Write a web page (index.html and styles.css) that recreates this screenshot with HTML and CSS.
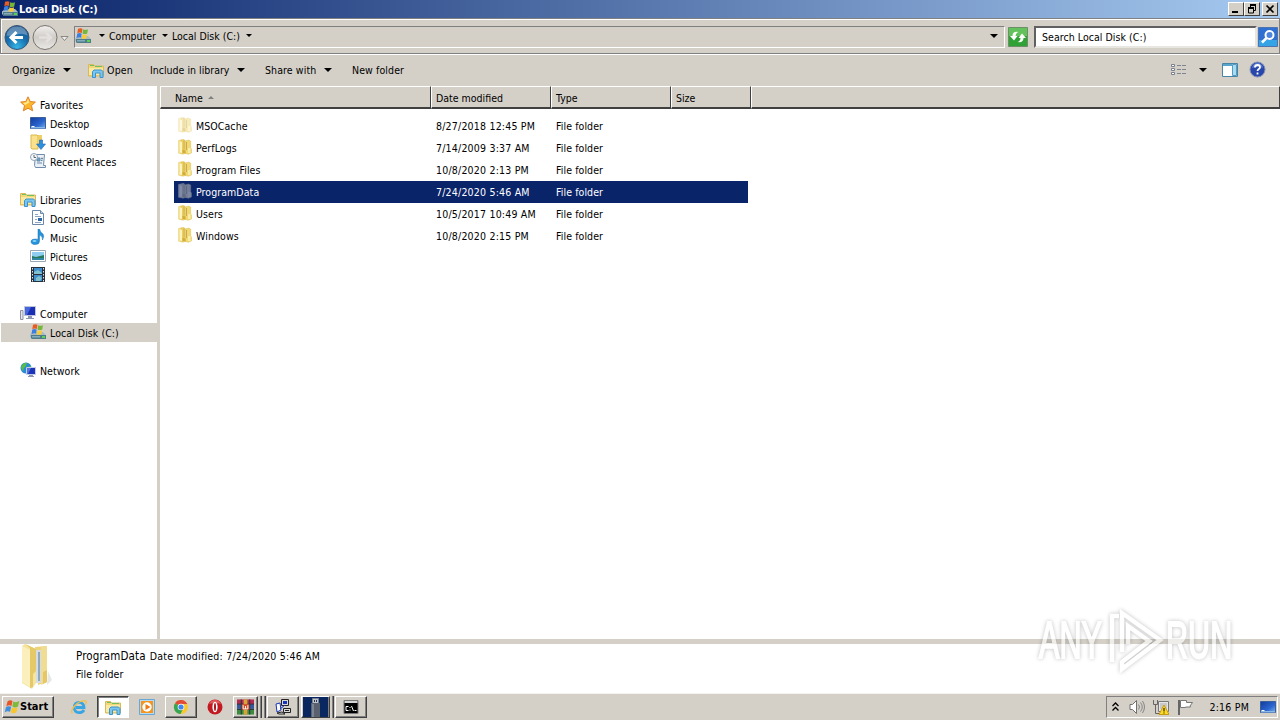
FILE: index.html
```html
<!DOCTYPE html>
<html lang="en">
<head>
    <meta charset="UTF-8">
    <meta name="viewport" content="width=device-width, initial-scale=1.0">
    <title>Local Disk (C:)</title>
    <link rel="stylesheet" href="styles.css">
</head>
<body>
    <!-- Shared icons -->
    <svg class="sprites" width="0" height="0">
        <defs>
            <linearGradient id="gold" x1="0" x2="1"><stop offset="0" stop-color="#fbeeb0"/><stop offset=".5" stop-color="#e9c94f"/><stop offset="1" stop-color="#f6e58e"/></linearGradient>
            <linearGradient id="screen" x1="0" y1="0" x2="1" y2="1"><stop offset="0" stop-color="#123a9c"/><stop offset=".6" stop-color="#2b66cf"/><stop offset="1" stop-color="#7db4ec"/></linearGradient>
            <radialGradient id="backfill" cx=".5" cy=".9" r=".9"><stop offset="0" stop-color="#35b5e4"/><stop offset=".5" stop-color="#1870b0"/><stop offset="1" stop-color="#1c4f87"/></radialGradient>
            <linearGradient id="fwdfill" x1="0" y1="0" x2="0" y2="1"><stop offset="0" stop-color="#f2f0ee"/><stop offset=".5" stop-color="#cfccc8"/><stop offset="1" stop-color="#ebe9e6"/></linearGradient>
        </defs>
        <symbol id="flag" viewBox="0 0 16 16">
            <path d="M3.500 2.500q2.500-2 5-.5L7.500 7Q5 5.500 2.300 7.500z" fill="#e8542a"/>
            <path d="M9.300 2.500q3 1.500 6-.5l-1.300 5.500q-3 2-5.700 0z" fill="#7fb93a"/>
            <path d="M2 8.300q2.500-2 5.200-.5l-1.200 5q-2.500-1.500-5.300.5z" fill="#3f8fdc"/>
            <path d="M8 8.300q3 1.700 5.700 0l-1.300 5q-2.700 2-5.700 0z" fill="#f8c62c"/>
        </symbol>
        <symbol id="disk" viewBox="0 0 16 16">
            <path d="M0 10.500L3 8h10l3 3v4H2l-2-2z" fill="#a9bcc4"/>
            <path d="M1 11h15v4H2l-1-1z" fill="#4f7b8b"/>
            <path d="M2 12h8v1.500H2z" fill="#86acb9"/>
            <path d="M12 12h3v2h-3z" fill="#57d44f"/>
            <path d="M3 .8q2.500-1.300 4.500 0l-.7 4.200Q4.500 4 2.300 5.200z" fill="#e65d24"/>
            <path d="M8.200 1.200q2.300 1.200 4.800 0l-.8 4.300q-2.500 1.200-4.700 0z" fill="#75b73a"/>
            <path d="M2.200 5.700q2.300-1.200 4.500 0L6 9.500Q4 8.700 1.500 10z" fill="#3a7ee0"/>
            <path d="M7.400 6.200q2.300 1.200 4.700 0l-.7 4q-2.400 1-4.700 0z" fill="#f7cb36"/>
        </symbol>
        <symbol id="folder" viewBox="0 0 16 16">
            <path d="M1.500 1.500l5-1.200L8 1.500v13l-2 .7-4.500-1z" fill="url(#gold)" stroke="#e0c766" stroke-width=".5"/>
            <path d="M8 2l3.500-1 2.200 1v7l.8 1v4l-3 1.200L8 14.500z" fill="#f0d973" stroke="#dcbf58" stroke-width=".5"/>
            <path d="M7 1v9.500M9.500 3v8" stroke="#cba94a" fill="none"/>
            <path d="M3 2.500l2 .500V14l-2-.5z" fill="#fdf3be"/>
            <path d="M5.500 10.500l3 1v3l-3-.5z" fill="#d2ac3c"/>
            <path d="M11 9h2.500v5H11z" fill="#f9eca4"/>
        </symbol>
        <symbol id="library" viewBox="0 0 16 16">
            <path d="M.5 2.500h5l1 1.500h9v10H.5z" fill="#f2d878" stroke="#d9b95c"/>
            <path d="M2 3.500h4M7 4.500h7" stroke="#6fbf63"/>
            <path d="M1 6h14v7H1z" fill="#fae9a2"/>
            <path d="M4.500 15.500V9.500L6 8h7.500L15 9.500v6h-3V11H7.500v4.500z" fill="#79c5ee" stroke="#3a93cc"/>
        </symbol>
        <symbol id="desktop" viewBox="0 0 16 16">
            <path d="M.5 2.500h15v11H.5z" fill="url(#screen)" stroke="#3c5f9c"/>
            <path d="M1 12h14v1.500H1z" fill="#8db9e6"/>
            <path d="M1.500 11.500h3" stroke="#fff"/>
        </symbol>
        <symbol id="monitor" viewBox="0 0 16 16">
            <path d="M.5 5.500h2.500v9H.5z" fill="#e3e5ea" stroke="#8b93a3"/>
            <path d="M4.500 1.500h11v9h-11z" fill="#1a2fb4" stroke="#bfc6dc"/>
            <path d="M5 2h6L7 10H5z" fill="#4666dc"/>
            <path d="M8 11h4v2h2v1H6v-1h2z" fill="#8e98b3"/>
        </symbol>
        <symbol id="network" viewBox="0 0 16 16">
            <circle cx="6" cy="6" r="5.500" fill="#2a8bd3"/>
            <path d="M2 3q3-3 5-2L6 4 4 6 3 9Q0 6 2 3zM7 5l4-1v3L8 9z" fill="#56bd4c"/>
            <path d="M6.500 5.500h9v7h-9z" fill="#1b34b8" stroke="#c5cee8"/>
            <path d="M7 6h4l-3 6H7z" fill="#5273e0"/>
            <path d="M9 13h4v1h1v1H8v-1h1z" fill="#8e98b3"/>
        </symbol>
    </svg>

    <header class="titlebar">
        <svg class="icon"><use href="#disk"/></svg>
        <h1 class="title">Local Disk (C:)</h1>
        <div class="window-buttons">
            <button class="wbtn"><svg width="12" height="10"><path d="M2 8h6" stroke="#000" stroke-width="2"/></svg></button>
            <button class="wbtn"><svg width="12" height="10"><path d="M4 1h6M2 4h6" stroke="#000" stroke-width="2"/><path d="M4.500 1v3M9.500 1v5.500h-2M2.500 4v5h5V4" stroke="#000" fill="none"/></svg></button>
            <button class="wbtn wbtn-close"><svg width="12" height="10"><path d="M2.500 1.500l7 7M9.500 1.500l-7 7" stroke="#000" stroke-width="1.700"/></svg></button>
        </div>
    </header>

    <nav class="addressbar">
        <svg class="nav-arrows" width="70" height="28">
            <circle cx="17" cy="14.500" r="12" fill="url(#backfill)" stroke="#3a5778"/>
            <path d="M6.500 12.500Q8 3.500 17 3.500t10.500 9q-5-3-10.500-1t-10.500 1z" fill="#fff" opacity=".3"/>
            <path d="M11 14.500h12M16.500 9L11 14.500l5.500 5.500" stroke="#fff" stroke-width="3" fill="none"/>
            <circle cx="45" cy="14.500" r="12" fill="url(#fwdfill)" stroke="#77736e"/>
            <path d="M39 14.500h12M46 10l5 4.500-5 4.500" stroke="#e3e0dd" stroke-width="2.500" fill="none"/>
            <path d="M61 13.500h7l-3.500 4z" fill="#eee" stroke="#77736e" stroke-width=".8"/>
        </svg>
        <div class="path">
            <svg class="icon path-icon"><use href="#disk"/></svg>
            <span class="arrow small"></span>
            <span class="crumb">Computer</span>
            <span class="arrow small"></span>
            <span class="crumb">Local Disk (C:)</span>
            <span class="arrow small"></span>
            <span class="arrow path-drop"></span>
        </div>
        <svg class="refresh" width="20" height="20">
            <path d="M.5.5h19v19H.5z" fill="#2fa135" stroke="#6d8f68"/>
            <path d="M1 1h18v8H1z" fill="#64c25c"/>
            <path d="M2 9l4 4.500L9.500 9H7.500q0-3 3-4Q4.500 4 4.500 9zM18 11l-4-4.500-3.500 4.500h2q0 3-3 4 6 1 6-4z" fill="#fff"/>
        </svg>
        <div class="search">Search Local Disk (C:)</div>
        <svg class="search-btn" width="20" height="20">
            <path d="M.5.5h19v19H.5z" fill="#2f6fd2" stroke="#4f74ad"/>
            <path d="M1 13h18v6H1z" fill="#35a4e6"/>
            <circle cx="11.500" cy="8" r="4" fill="#4d84dc" stroke="#fff" stroke-width="2"/>
            <path d="M8.500 11L4 15.500" stroke="#fff" stroke-width="2.500"/>
        </svg>
    </nav>

    <div class="toolbar">
        <span class="tool organize">Organize <i class="arrow"></i></span>
        <span class="tool open"><svg class="icon"><use href="#library"/></svg>Open</span>
        <span class="tool include">Include in library <i class="arrow"></i></span>
        <span class="tool share">Share with <i class="arrow"></i></span>
        <span class="tool new">New folder</span>
        <div class="view-tools">
            <svg width="16" height="14"><g fill="#fff" stroke="#77808b"><path d="M.5 1.500h3v2h-3zM.5 5.500h3v2h-3zM.5 9.500h3v2h-3z"/></g><path d="M6 2.500h4M11 2.500h4M6 6.500h4M11 6.500h4M6 10.500h4M11 10.500h4" stroke="#7d8590"/></svg>
            <i class="arrow"></i>
            <svg class="preview" width="16" height="14"><path d="M.5.500h15v13H.5z" fill="#fff" stroke="#4685a8"/><path d="M1 2h9" stroke="#59a5cc" stroke-width="2"/><path d="M10.500 1.500h4v11h-4z" fill="#a7dcf2" stroke="#559bc0"/></svg>
            <svg class="help" width="17" height="17"><circle cx="8.500" cy="8.500" r="7.500" fill="#2946ab" stroke="#8492b5"/><path d="M3 7q1-5 5.500-5T14 7q-5-2-11 0z" fill="#6f8de0" opacity=".7"/><path d="M6 6.500Q6 4 8.500 4T11 6.300q0 1-1.200 1.700T8.500 10M8.500 11.500v2" stroke="#fff" stroke-width="1.800" fill="none"/></svg>
        </div>
    </div>

    <main class="content">
        <aside class="sidebar">
            <ul class="tree">
                <li class="root"><svg class="icon" viewBox="0 0 16 16"><path d="M8 .8l2.200 4.700 5.200.6-3.900 3.500 1.100 5.200L8 12.200l-4.600 2.600 1.100-5.200L.6 6.100l5.200-.6z" fill="#fcb62b" stroke="#e0822a"/><path d="M8 3l1.500 3.500L5 9 3 7l3.500-.8z" fill="#ffe98a"/></svg>Favorites</li>
                <li><svg class="icon"><use href="#desktop"/></svg>Desktop</li>
                <li><svg class="icon" viewBox="0 0 16 16"><path d="M1 1h6l1 1v13H2l-1-1z" fill="#f9e28b" stroke="#dcb84b"/><path d="M8 1h4v9H8z" fill="#edcf65"/><path d="M9.500 6h3v4H15.500l-4.500 5.500L6.500 10h3z" fill="#2c8fe0" stroke="#2166a8" stroke-width=".6"/></svg>Downloads</li>
                <li><svg class="icon" viewBox="0 0 16 16"><path d="M5.500 1.500h9l-1 11h2v2h-10l-1-2z" fill="#e9f0f7" stroke="#718ca8"/><path d="M7 5h3v3H7zM11.500 5h1v1h-1zM7 10h5M11 7.500h1.500" fill="#69a2cf" stroke="#6b8aa6"/><circle cx="4" cy="4" r="3.500" fill="#f7f9fb" stroke="#91a3b5"/><path d="M4 2v2.500h2" stroke="#567" fill="none"/></svg>Recent Places</li>
            </ul>
            <ul class="tree">
                <li class="root"><svg class="icon"><use href="#library"/></svg>Libraries</li>
                <li><svg class="icon" viewBox="0 0 16 16"><path d="M2.500.500h8l3 3v11h-11z" fill="#fff" stroke="#6d87a8"/><path d="M10.500.500v3h3" fill="#bdd3e9" stroke="#6d87a8"/><path d="M5 4.500h3M5 6.500h6M5 12.500h6M5 9.500h2" stroke="#8ba7c4"/><path d="M8 8h4v3H8z" fill="#2e66a5"/></svg>Documents</li>
                <li><svg class="icon" viewBox="0 0 16 16"><path d="M8 0h1.500q.5 3 3.500 5 1.500 2-.5 6Q13 7 9.500 6v6q0 3.500-4 3.500Q1 15.500 1 12.700 1 10 5 10q2 0 3 .500z" fill="#2594dc" stroke="#1b72b5" stroke-width=".5"/><ellipse cx="4.500" cy="12" rx="2" ry="1" fill="#86d3f6"/></svg>Music</li>
                <li><svg class="icon" viewBox="0 0 16 16"><path d="M.5 2.500h15v11H.5z" fill="#fff" stroke="#9aa8b5"/><path d="M2 4h12v8H2z" fill="#8ccdf0"/><path d="M2 8l4 1 8-2v5H2z" fill="#27795a"/><path d="M2 10h12v2H2z" fill="#2f86a5"/></svg>Pictures</li>
                <li><svg class="icon" viewBox="0 0 16 16"><path d="M1 0h14v15H1z" fill="#26313d"/><path d="M4 1h8v6H4zM4 8h8v6H4z" fill="#3d8ecb"/><path d="M4 5l4-2 4 3v1H4zM6 11l3-2 3 2-2 3H6z" fill="#81c1cf"/><path d="M2.500 1v14M13.500 1v14" stroke="#dce5ee" stroke-dasharray="1.500 1.500"/></svg>Videos</li>
            </ul>
            <ul class="tree">
                <li class="root"><svg class="icon"><use href="#monitor"/></svg>Computer</li>
                <li class="current"><svg class="icon"><use href="#disk"/></svg>Local Disk (C:)</li>
            </ul>
            <ul class="tree">
                <li class="root"><svg class="icon"><use href="#network"/></svg>Network</li>
            </ul>
        </aside>

        <section class="files">
            <div class="row head">
                <span class="th">Name <i class="sort"></i></span>
                <span class="th">Date modified</span>
                <span class="th">Type</span>
                <span class="th">Size</span>
                <span class="th"></span>
            </div>
            <div class="list">
                <div class="row file hidden-item"><span class="name"><svg class="icon"><use href="#folder"/></svg>MSOCache</span><span class="date">8/27/2018 12:45 PM</span><span class="type">File folder</span></div>
                <div class="row file"><span class="name"><svg class="icon"><use href="#folder"/></svg>PerfLogs</span><span class="date">7/14/2009 3:37 AM</span><span class="type">File folder</span></div>
                <div class="row file"><span class="name"><svg class="icon"><use href="#folder"/></svg>Program Files</span><span class="date">10/8/2020 2:13 PM</span><span class="type">File folder</span></div>
                <div class="row file selected"><span class="name"><svg class="icon"><use href="#folder"/></svg>ProgramData</span><span class="date">7/24/2020 5:46 AM</span><span class="type">File folder</span></div>
                <div class="row file"><span class="name"><svg class="icon"><use href="#folder"/></svg>Users</span><span class="date">10/5/2017 10:49 AM</span><span class="type">File folder</span></div>
                <div class="row file"><span class="name"><svg class="icon"><use href="#folder"/></svg>Windows</span><span class="date">10/8/2020 2:15 PM</span><span class="type">File folder</span></div>
            </div>
        </section>
    </main>

    <section class="details">
        <svg class="details-icon" width="36" height="46" viewBox="0 0 36 46">
            <path d="M14 3l11-1v36l-8 3z" fill="#ecd47c"/>
            <path d="M14 6h6v33h-6z" fill="#d5dde2"/>
            <path d="M17 8h2v29h-2z" fill="#8fa9bf"/>
            <path d="M20 3l6-1v36l-6 3z" fill="#f0dc92"/>
            <path d="M1 2l3-2 11 5v34l-4 6-10-6z" fill="#f5e49f"/>
            <path d="M4 0l11 5v22l-3 3v13l-3 1V4z" fill="#e5c969"/>
            <path d="M1 2l8 4v37l-8-5z" fill="#fbf0bd"/>
            <path d="M22 28l4-2v12l-4 2z" fill="#e6c763"/>
            <path d="M27 27l4 9-5 5z" fill="#e6e8e8"/>
        </svg>
        <div class="details-text">
            <p><span class="details-name">ProgramData</span> <span class="details-date">Date modified: 7/24/2020 5:46 AM</span></p>
            <p>File folder</p>
        </div>
    </section>

    <footer class="taskbar">
        <button class="start"><svg class="icon"><use href="#flag"/></svg>Start</button>
        <div class="tasks">
            <span class="task flat"><svg class="icon" viewBox="0 0 16 16"><path d="M13 11Q11.500 13.700 8 13.700 3.300 13.700 3.300 8.500T8 3.300t5 5.200H5" fill="none" stroke="#38a5e5" stroke-width="2.800"/><path d="M1.500 14.500Q-1 12 4 6.500T15 2q1 1-.5 3.500" fill="none" stroke="#f0c04a" stroke-width="1.300"/></svg></span>
            <span class="task active"><svg class="icon"><use href="#library"/></svg></span>
            <span class="task flat"><svg class="icon" viewBox="0 0 16 16"><path d="M.5.500h15v15H.5z" fill="#b7dcf2" stroke="#68a7d4"/><path d="M2 2h12v12H2z" fill="#f5941e"/><circle cx="8" cy="8" r="4.700" fill="#fff"/><path d="M6.500 5l5 3-5 3z" fill="#ee7a10"/></svg></span>
            <span class="task"><svg class="icon" viewBox="0 0 16 16"><circle cx="8" cy="8" r="7" fill="#f9c82e"/><path d="M8 8L2 4.200A7 7 0 0 1 14.300 5H8z" fill="#e14b38"/><path d="M2 4.200A7 7 0 0 0 7.500 15L10 10 8 8z" fill="#35a653"/><circle cx="8" cy="8" r="3.300" fill="#fff"/><circle cx="8" cy="8" r="2.600" fill="#4385ef"/></svg></span>
            <span class="task flat"><svg class="icon" viewBox="0 0 16 16"><circle cx="8" cy="8" r="7.500" fill="#c31920"/><path d="M2 5q2-4 6-4t6 4q-5-2-12 0z" fill="#e25a5a"/><ellipse cx="8" cy="8" rx="2.600" ry="5.300" fill="#fff"/><ellipse cx="8" cy="8" rx="1" ry="4" fill="#a4151c"/></svg></span>
            <span class="task grouped"><svg width="17" height="16" viewBox="0 0 18 16"><path d="M0 0h18v5H0z" fill="#b22c51"/><path d="M0 5h18v5H0z" fill="#37579f"/><path d="M0 10h18v6H0z" fill="#3c8a3d"/><path d="M0 5h18M0 10.500h18M4.500 0v16M13.500 0v16" stroke="#222f3c"/><path d="M7 0h4v16H7z" fill="#d7a438"/><path d="M5 5h8v6H5z" fill="#cf4b24"/><path d="M6.500 6v4h5V6M9 7v3" fill="none" stroke="#fff"/></svg></span><i class="edge"></i><i class="edge last"></i>
            <span class="task"><svg class="icon" viewBox="0 0 16 16"><path d="M6.500.500h7v6h-7zM8.500 9.500h7v4h-7z" fill="#d9d9d9" stroke="#222"/><path d="M8 2h4v3H8z" fill="#1834bd"/><path d="M1 5l4-1 1 7-4 2zM5 10l5-4" fill="#fff" stroke="#1834bd"/><path d="M2 14l5-1 3 2H4z" fill="#eee" stroke="#222"/><path d="M10 11.500h4" stroke="#222"/></svg></span>
            <span class="task usb"><svg width="25" height="20" viewBox="0 0 25 20"><path d="M0 0h25v20H0z" fill="#0b275f"/><path d="M9.500 1.500h6v5h-6z" fill="#bfc4cc" stroke="#7b828c"/><path d="M11 3h1v2h-1zM13 3h1v2h-1z" fill="#26364e"/><path d="M8 6h9v14H8z" fill="#59616e"/><path d="M9 7h2v13H9z" fill="#7b8491"/></svg></span><i class="edge last"></i>
            <span class="task"><svg width="16" height="14" viewBox="0 0 15 14"><path d="M.5.500h14v13H.5z" fill="#000" stroke="#777"/><path d="M1 1h13v2H1z" fill="#d7d7d7"/><path d="M5 6.500H2.500v4H5M6.500 7v1M6.500 9.500v1M8 6l2 5M11 10.500h2" fill="none" stroke="#fff"/></svg></span>
        </div>
        <div class="tray">
            <svg class="chevrons" width="7" height="10"><path d="M.5 4l3-3 3 3M.5 8.500l3-3 3 3" fill="none" stroke="#000" stroke-width="1.300"/></svg>
            <svg class="icon speaker" viewBox="0 0 16 16"><path d="M1 5.500h2.500l4-4v13l-4-4H1z" fill="#fff" stroke="#707070"/><path d="M9.500 5.500q2 2.500 0 5M11.500 3.500q3.500 4.500 0 9M13.500 2q4 6 0 12" fill="none" stroke="#858585"/></svg>
            <svg class="icon" viewBox="0 0 16 16"><path d="M5.500 2.500h10v10h-10z" fill="#e6e6e6" stroke="#777"/><path d="M7 4h7v6H7z" fill="#c8c8c8"/><path d="M.5 1v4.500h4V1M2.500 5.500v9h4" fill="none" stroke="#666"/><path d="M11 6l5 9.500H6z" fill="#ffda25" stroke="#c79b12"/><path d="M11 9v3.500M11 13.500v1" stroke="#000"/></svg>
            <svg class="icon flagicon" viewBox="0 0 16 16"><path d="M2 1v15" stroke="#666" stroke-width="2"/><path d="M3.500 1.500h6v2h6l-2.500 3.500 .5 1h-5v.5h-5z" fill="#fff" stroke="#777"/></svg>
            <span class="clock">2:16 PM</span>
            <svg class="icon"><use href="#desktop"/></svg>
        </div>
    </footer>

    <div class="watermark">
        <span>ANY</span>
        <svg width="58" height="66" viewBox="0 0 58 66"><path d="M4 54V8H11M14 44V5l38 27-38 29V54L41 33 20 18V36" fill="none" stroke="#fff" stroke-width="4.500"/></svg>
        <span>RUN</span>
    </div>
</body>
</html>
```
FILE: styles.css
```css
* { box-sizing: border-box; }
body { margin: 0; width: 1280px; height: 720px; overflow: hidden; display: flex; flex-direction: column; background: #d4d0c8; color: #000; font-family: "DejaVu Sans Condensed", "DejaVu Sans", sans-serif; font-stretch: condensed; font-size: 10.5px; line-height: 14px; white-space: nowrap; }
ul, p, h1 { margin: 0; padding: 0; list-style: none; }
button { padding: 0; font: inherit; }
svg { flex: none; }
.sprites { position: absolute; }
.icon { width: 16px; height: 16px; }
.arrow { display: inline-block; border: 4px solid transparent; border-top-color: #000; border-bottom: 0; }
.arrow.small { border-width: 3px 3px 0; }

/* Title bar */
.titlebar { display: flex; align-items: center; height: 18px; padding: 0 2px; background: linear-gradient(to right, #0a246a, #a6caf0); color: #fff; }
.title { flex: 1; padding: 1px 0 0 1px; font-size: 11px; line-height: 16px; font-weight: bold; letter-spacing: -.1px; }
.window-buttons { display: flex; }
.wbtn { width: 16px; height: 14px; border: 1px solid; border-color: #fff #404040 #404040 #fff; background: #d4d0c8; display: flex; align-items: center; justify-content: center; }
.wbtn-close { margin-left: 2px; }

/* Address bar */
.addressbar { display: flex; align-items: center; height: 36px; border: 1px solid #808080; box-shadow: inset 1px 1px #fff, 0 1px #fff; padding: 1px 1px 0 0; }
.nav-arrows { margin-left: -1px; }
.path { display: flex; align-items: center; width: 931px; height: 22px; margin-left: 4px; padding: 0 6px 2px 0; border: 1px solid; border-color: #808080 #fff #fff #808080; }
.path-icon { margin-right: 8px; }
.crumb { margin: 0 6px 0 4px; }
.path-drop { margin-left: auto; }
.refresh { margin-left: 3px; }
.search { flex: 1; height: 22px; margin: 0 1px 0 6px; padding: 2px 6px; background: #fff; border: 2px solid; border-color: #606060 #e8e6e1 #e8e6e1 #606060; letter-spacing: .05px; }

/* Command bar */
.toolbar { display: flex; align-items: center; height: 32px; padding: 0 14px 1px 12px; }
.tool { display: flex; align-items: center; }
.tool .arrow { margin-left: auto; }
.organize { width: 59px; margin-right: 17px; letter-spacing: .1px; }
.open { width: 46px; margin-right: 16px; gap: 3px; letter-spacing: .2px; }
.include { width: 95px; margin-right: 20px; }
.share { width: 67px; margin-right: 20px; letter-spacing: .1px; }
.new { letter-spacing: .1px; }
.view-tools { display: flex; align-items: center; margin-left: auto; }
.view-tools .arrow { margin-left: 12px; }
.preview { margin-left: 15px; }
.help { margin-left: 11px; }

/* Folder tree and file list */
.content { display: flex; height: 553px; background: #fff; }
.sidebar { width: 160px; padding-top: 9px; border-right: 3px solid #d4d0c8; letter-spacing: .06px; }
.tree { margin-bottom: 19px; }
.tree li { display: flex; align-items: center; height: 19px; margin-left: 1px; padding-left: 29px; gap: 4px; }
.tree .icon { margin-top: -2px; }
.tree .root { padding-left: 19px; }
.tree .current { background: #d4d0c8; }
.files { flex: 1; }
.row { display: grid; }
.head { grid-template-columns: 271px 120px 120px 80px 1fr; height: 23px; }
.th { padding: 4px 0 0 4px; background: #d4d0c8; border: solid; border-width: 1px 1px 2px; border-color: #fff #404040 #404040 #fff; }
.th:first-child { padding-left: 14px; }
.sort { display: inline-block; border: 3px solid transparent; border-bottom-color: #808080; border-top: 0; margin: 0 0 3px 2px; }
.list { padding: 6px 0 0 14px; }
.file { grid-template-columns: 262px 120px 1fr; align-items: center; width: 574px; height: 22px; letter-spacing: .08px; }
.name { display: flex; align-items: center; padding-left: 3px; gap: 3px; }
.name .icon { margin-top: -2px; }
.date { letter-spacing: .2px; }
.hidden-item .icon { opacity: .5; }
.selected { background: #0a246a; color: #fff; }
.selected .icon { filter: grayscale(.8); opacity: .5; }

/* Details pane */
.details { display: flex; height: 54px; border-top: 5px solid #d4d0c8; background: #fff; }
.details-icon { margin: 0 19px 0 21px; }
.details-text { padding-top: 5px; }
.details-text p { height: 18px; letter-spacing: .12px; }
.details-name { font-size: 11.5px; }
.details-date { letter-spacing: .22px; margin-left: 1px; }

/* Taskbar */
.taskbar { display: flex; align-items: center; height: 27px; padding: 0 2px; border-top: 1px solid #f4f2ee; }
.start { display: flex; align-items: center; width: 52px; height: 22px; padding-left: 1px; border: 1px solid; border-color: #fff #404040 #404040 #fff; box-shadow: inset -1px -1px #808080; background: #d4d0c8; font-weight: bold; font-size: 11px; }
.tasks { display: flex; align-items: center; margin-left: 9px; }
.task { display: flex; align-items: center; justify-content: center; width: 32px; height: 22px; border: 1px solid; border-color: #fff #404040 #404040 #fff; box-shadow: inset -1px -1px #808080; margin-right: 2px; }
.flat { border-color: transparent; box-shadow: none; }
.active { border-color: #404040 #fff #fff #404040; box-shadow: inset 1px 1px #808080; background: #fff; }
.grouped { width: 25px; margin-right: 0; }
.usb { width: 29px; margin-right: 0; }
.edge { width: 4px; height: 22px; border-right: 1px solid #404040; box-shadow: inset -1px 0 #808080; }
.edge.last { margin-right: 1px; }
.tray { display: flex; align-items: center; width: 172px; height: 22px; margin-left: auto; padding: 0 1px 0 5px; border: 1px solid; border-color: #808080 #fff #fff #808080; }
.speaker { margin: 0 8px 0 10px; }
.flagicon { margin-left: 8px; }
.clock { margin: 0 11px 0 auto; letter-spacing: .2px; }

/* Watermark in the corner */
.watermark { position: absolute; left: 1039px; top: 607px; display: flex; align-items: center; width: 200px; height: 68px; color: #fff; font: 51px/68px "Liberation Sans", sans-serif; -webkit-text-stroke: 2px #fff; filter: drop-shadow(0 0 2px rgba(0,0,0,.4)); opacity: .62; }
.watermark span { width: 69px; transform: scaleX(.6); transform-origin: left; }
```
